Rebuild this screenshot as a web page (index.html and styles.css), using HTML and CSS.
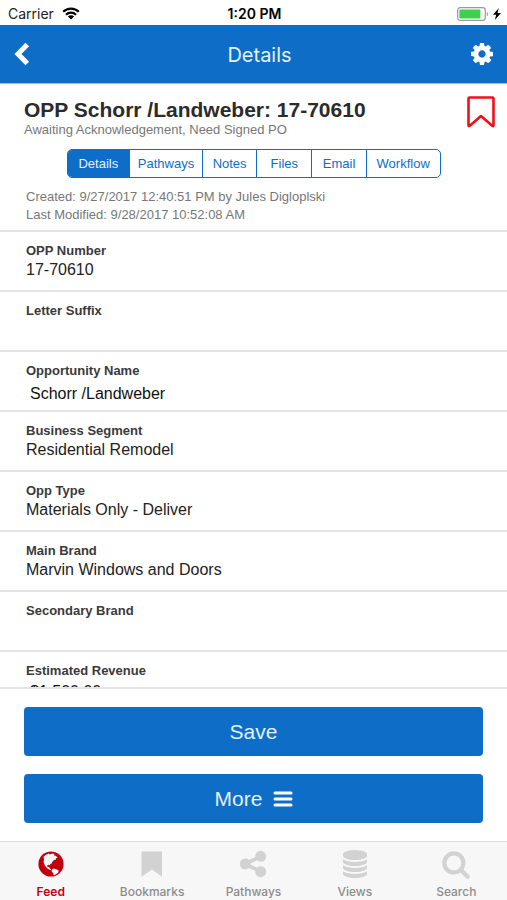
FILE: index.html
```html
<!DOCTYPE html>
<html lang="en">
<head>
    <meta charset="UTF-8">
    <meta name="viewport" content="width=device-width, initial-scale=1.0">
    <title>Details</title>
    <link rel="stylesheet" href="styles.css">
</head>
<body>
    <div class="app">
        <div class="status-bar">
            <div class="status-left">
                <span>Carrier</span>
                <svg class="wifi" viewBox="0 0 18 13" aria-hidden="true">
                    <path d="M1.2 4.8a11 11 0 0 1 15.6 0M4 7.7a7 7 0 0 1 10 0" fill="none" stroke="#000" stroke-width="2.2"/>
                    <path d="M9 12.6 5.9 9.5a4.4 4.4 0 0 1 6.2 0z"/>
                </svg>
            </div>
            <span class="clock">1:20 PM</span>
            <div class="status-right">
                <svg class="battery" viewBox="0 0 32 14" aria-hidden="true">
                    <rect x="0.7" y="0.7" width="27.6" height="12.6" rx="2.5" fill="#fff" stroke="#999" stroke-width="1.2"/>
                    <rect x="2.4" y="2.4" width="21" height="9.2" rx="1" fill="#3fd04d"/>
                    <path d="M29.8 4.4q2.400 2.600 0 5.200z" fill="#999"/>
                </svg>
                <svg class="bolt" viewBox="0 0 8 12" aria-hidden="true">
                    <path d="M5.8 0 0 6.8h3.2L1.8 12 8 4.9H4.6z"/>
                </svg>
            </div>
        </div>

        <header class="app-header">
            <button class="back-btn" aria-label="Back">
                <svg class="chevron" viewBox="0 0 16 24" aria-hidden="true">
                    <path d="M13.300 2.600 4 12l9.300 9.400" fill="none" stroke="#fff" stroke-width="5"/>
                </svg>
            </button>
            <h1>Details</h1>
            <button aria-label="Settings">
                <svg class="cog" viewBox="128 128 1536 1536" aria-hidden="true">
                    <path fill="#fff" d="M1152 896q0-106-75-181t-181-75-181 75-75 181 75 181 181 75 181-75 75-181zm512-109v222q0 12-8 23t-20 13l-185 28q-19 54-39 91 35 50 107 138 10 12 10 25t-9 23q-27 37-99 108t-94 71q-12 0-26-9l-138-108q-44 23-91 38-16 136-29 186-7 28-36 28h-222q-14 0-24.5-8.5t-11.5-21.5l-28-184q-49-16-90-37l-141 107q-10 9-25 9-14 0-25-11-126-114-165-168-7-10-7-23 0-12 8-23 15-21 51-66.5t54-70.5q-27-50-41-99l-183-27q-13-2-21-12.5t-8-23.5v-222q0-12 8-23t19-13l186-28q14-46 39-92-40-57-107-138-10-12-10-24 0-10 9-23 26-36 98.5-107.5t94.5-71.5q13 0 26 10l138 107q44-23 91-38 16-136 29-186 7-28 36-28h222q14 0 24.5 8.5t11.5 21.5l28 184q49 16 90 37l142-107q9-9 24-9 13 0 25 10 129 119 165 170 7 8 7 22 0 12-8 23-15 21-51 66.5t-54 70.5q26 50 41 98l183 28q13 2 21 12.5t8 23.5z"/>
                </svg>
            </button>
        </header>

        <section class="summary">
            <div class="summary-top">
                <div>
                    <h2>OPP Schorr /Landweber: 17-70610</h2>
                    <p class="status-text">Awaiting Acknowledgement, Need Signed PO</p>
                </div>
                <button aria-label="Bookmark">
                    <svg class="bookmark" viewBox="0 0 28 32" aria-hidden="true">
                        <path d="M2.5 1.5h23q1 0 1 1v26.600q0 1.700-1.300.6L14 20 2.800 29.700q-1.300 1.100-1.300-.6V2.500q0-1 1-1z" fill="none" stroke="#f01018" stroke-width="2.6" stroke-linejoin="round"/>
                    </svg>
                </button>
            </div>
            <nav class="segments">
                <button class="active">Details</button>
                <button>Pathways</button>
                <button>Notes</button>
                <button>Files</button>
                <button>Email</button>
                <button>Workflow</button>
            </nav>
            <div class="meta">
                <p>Created: 9/27/2017 12:40:51 PM by Jules Digloplski</p>
                <p>Last Modified: 9/28/2017 10:52:08 AM</p>
            </div>
        </section>

        <main class="fields">
            <div class="field">
                <h3>OPP Number</h3>
                <p>17-70610</p>
            </div>
            <div class="field">
                <h3>Letter Suffix</h3>
            </div>
            <div class="field">
                <label for="opp-name">Opportunity Name</label>
                <input type="text" id="opp-name" value="Schorr /Landweber">
            </div>
            <div class="field">
                <h3>Business Segment</h3>
                <p>Residential Remodel</p>
            </div>
            <div class="field">
                <h3>Opp Type</h3>
                <p>Materials Only - Deliver</p>
            </div>
            <div class="field">
                <h3>Main Brand</h3>
                <p>Marvin Windows and Doors</p>
            </div>
            <div class="field">
                <h3>Secondary Brand</h3>
            </div>
            <div class="field">
                <label for="revenue">Estimated Revenue</label>
                <input type="text" id="revenue" class="currency" value="$1,500.00">
            </div>
        </main>

        <div class="actions">
            <button>Save</button>
            <button>
                More
                <svg class="bars" viewBox="0 0 18 16" aria-hidden="true">
                    <path d="M1 2h16M1 8h16M1 14h16" stroke="#fff" stroke-width="3" stroke-linecap="round"/>
                </svg>
            </button>
        </div>

        <nav class="tab-bar">
            <a href="#feed" class="active">
                <svg viewBox="0 0 28 28" aria-hidden="true">
                    <circle cx="14" cy="14" r="12.600" fill="#c1000f"/>
                    <path fill="#f7f7f7" d="M6.500 6.800 8.600 4.900l3-1.300 1.400.9 2-.9 2.600.6-.7 1.300 1.900.2 1.900 2-1.700.5-.3 1.500-1.700.4-1.600 1.700-.6 1.500-1.600.9-.3 1.300-1.200-.8-1.500.8.3 1.700 1.600-.5.3 1.400 1.300.9.500 1.300-1.700-.6-2.600-1.700-2.100-2.600L6.600 12l.5-2.400z"/>
                    <path fill="#f7f7f7" d="m14.800 19.400 2.200-1 2.200.8 2.500 1.300-.5 2-1.900 1.500-2.500 1.400-.5-2.100-1.600-1.700z"/>
                </svg>
                <span>Feed</span>
            </a>
            <a href="#bookmarks">
                <svg viewBox="0 0 28 28" aria-hidden="true">
                    <path d="M4 1.500h19.500q.5 0 .5.500v24.800L14 19.500 3.500 26.800V2q0-.5.5-.5z"/>
                </svg>
                <span>Bookmarks</span>
            </a>
            <a href="#pathways">
                <svg viewBox="80 80 1632 1632" aria-hidden="true">
                    <path d="M1344 1024q133 0 226.500 93.500t93.500 226.500-93.500 226.500-226.500 93.500-226.500-93.500-93.500-226.500q0-12 2-34l-360-180q-92 86-218 86-133 0-226.500-93.500t-93.500-226.500 93.500-226.500 226.500-93.500q126 0 218 86l360-180q-2-22-2-34 0-133 93.500-226.500t226.500-93.500 226.500 93.500 93.500 226.500-93.500 226.500-226.500 93.500q-126 0-218-86l-360 180q2 22 2 34t-2 34l360 180q92-86 218-86z"/>
                </svg>
                <span>Pathways</span>
            </a>
            <a href="#views">
                <svg viewBox="0 0 1792 1792" aria-hidden="true">
                    <path d="M896 768q237 0 443-43t325-127v170q0 69-103 128t-280 93.500-385 34.500-385-34.500-280-93.500-103-128v-170q119 84 325 127t443 43zm0 768q237 0 443-43t325-127v170q0 69-103 128t-280 93.500-385 34.500-385-34.500-280-93.500-103-128v-170q119 84 325 127t443 43zm0-384q237 0 443-43t325-127v170q0 69-103 128t-280 93.500-385 34.500-385-34.500-280-93.500-103-128v-170q119 84 325 127t443 43zm0-1152q208 0 385 34.500t280 93.500 103 128v128q0 69-103 128t-280 93.500-385 34.500-385-34.500-280-93.500-103-128v-128q0-69 103-128t280-93.500 385-34.500z"/>
                </svg>
                <span>Views</span>
            </a>
            <a href="#search">
                <svg viewBox="50 50 1692 1692" aria-hidden="true">
                    <path d="M1216 832q0-185-131.500-316.500t-316.500-131.500-316.500 131.500-131.500 316.500 131.500 316.500 316.500 131.500 316.500-131.500 131.500-316.500zm512 832q0 52-38 90t-90 38q-54 0-90-38l-343-342q-179 124-399 124-143 0-273.500-55.500t-225-150-150-225-55.500-273.500 55.500-273.500 150-225 225-150 273.500-55.500 273.500 55.500 225 150 150 225 55.500 273.500q0 220-124 399l343 343q37 37 37 90z"/>
                </svg>
                <span>Search</span>
            </a>
        </nav>
    </div>
</body>
</html>
```

FILE: styles.css
```css
* {
    margin: 0;
    padding: 0;
    box-sizing: border-box;
}

body {
    font-family: "Liberation Sans", Arial, sans-serif;
    background-color: #fff;
    height: 100vh;
    overflow: hidden;
}

button,
input {
    font-family: inherit;
    border: none;
    background-color: transparent;
}

button {
    cursor: pointer;
}

svg {
    display: block;
    flex-shrink: 0;
    overflow: visible;
}

.app {
    height: 100vh;
    display: flex;
    flex-direction: column;
}

/* Status bar */
.status-bar {
    display: grid;
    grid-template-columns: 1fr auto 1fr;
    align-items: center;
    height: 25px;
    padding: 2px 6px 0 8px;
    font-family: Inter, sans-serif;
    font-size: 14px;
    color: #222;
}

.status-left,
.status-right {
    display: flex;
    align-items: center;
    gap: 8px;
}

.status-right {
    justify-content: flex-end;
    gap: 4px;
}

.clock {
    font-weight: 600;
    color: #000;
}

.wifi {
    width: 18px;
    height: 13px;
}

.battery {
    width: 32px;
    height: 14px;
}

.bolt {
    width: 8px;
    height: 12px;
}

/* Header */
.app-header {
    display: flex;
    justify-content: space-between;
    align-items: center;
    height: 59px;
    padding: 0 14px;
    background-color: #0e6ec7;
    border-bottom: 1px solid #8fc0ee;
}

.app-header h1 {
    padding-top: 2px;
    font-family: Inter, sans-serif;
    font-size: 20px;
    font-weight: 400;
    color: #e4f1ff;
}

.back-btn {
    padding-right: 18px;
}

.chevron {
    width: 16px;
    height: 24px;
}

.cog {
    width: 22px;
    height: 22px;
}

/* Record summary */
.summary {
    padding: 12px 12px 6px;
    border-bottom: 2px solid #e4e4e4;
}

.summary-top {
    display: flex;
    justify-content: space-between;
    align-items: flex-start;
    padding-left: 12px;
}

.summary h2 {
    font-size: 21px;
    line-height: 28px;
    font-weight: 700;
    color: #2b2b2b;
}

.status-text {
    font-size: 13px;
    line-height: 12px;
    color: #777;
}

.bookmark {
    width: 28px;
    height: 32px;
}

.segments {
    display: grid;
    grid-template-columns: 62fr 73fr 55fr 55fr 55fr 74fr;
    width: 80%;
    max-width: 374px;
    height: 29px;
    margin: 13px auto 10px;
    border: 1px solid #0e6ec7;
    border-radius: 5px;
    overflow: hidden;
}

.segments button {
    font-size: 13px;
    color: #0e6ec7;
    border-left: 1px solid #0e6ec7;
}

.segments button:first-child {
    border-left: none;
}

.segments button.active {
    background-color: #0e6ec7;
    color: #e4f1ff;
}

.meta {
    padding-left: 14px;
    font-size: 13px;
    line-height: 18px;
    color: #777;
}

/* Fields */
.fields {
    flex: 1;
    min-height: 0;
    overflow: hidden;
}

.field {
    display: flex;
    flex-direction: column;
    height: 60px;
    padding: 9px 26px 0;
    border-bottom: 2px solid #e4e4e4;
}

.field h3,
.field label {
    font-size: 13px;
    line-height: 19px;
    font-weight: 700;
    color: #3a3a3a;
}

.field p {
    font-size: 16px;
    line-height: 19px;
    color: #222;
}

.field input {
    height: 28px;
    padding-left: 4px;
    font-size: 16px;
    color: #111;
    outline: none;
}

.field .currency {
    height: 24px;
}

/* Actions */
.actions {
    display: flex;
    flex-direction: column;
    gap: 18px;
    padding: 18px 24px;
    border-top: 2px solid #e4e4e4;
}

.actions button {
    display: flex;
    justify-content: center;
    align-items: center;
    gap: 12px;
    height: 49px;
    background-color: #0e6ec7;
    border-radius: 4px;
    font-size: 21px;
    color: #e4f1ff;
}

.bars {
    width: 18px;
    height: 16px;
}

/* Bottom tabs */
.tab-bar {
    display: grid;
    grid-template-columns: repeat(5, 1fr);
    height: 59px;
    padding-top: 8px;
    background-color: #f7f7f7;
    border-top: 1px solid #dcdcdc;
}

.tab-bar a {
    display: flex;
    flex-direction: column;
    align-items: center;
    gap: 6px;
    font-family: Inter, sans-serif;
    font-size: 12px;
    line-height: 16px;
    font-weight: 500;
    color: #8c8c8c;
    text-decoration: none;
}

.tab-bar a.active {
    color: #c1000f;
    font-weight: 600;
}

.tab-bar svg {
    width: 28px;
    height: 28px;
    fill: #d2d2d2;
}
```
